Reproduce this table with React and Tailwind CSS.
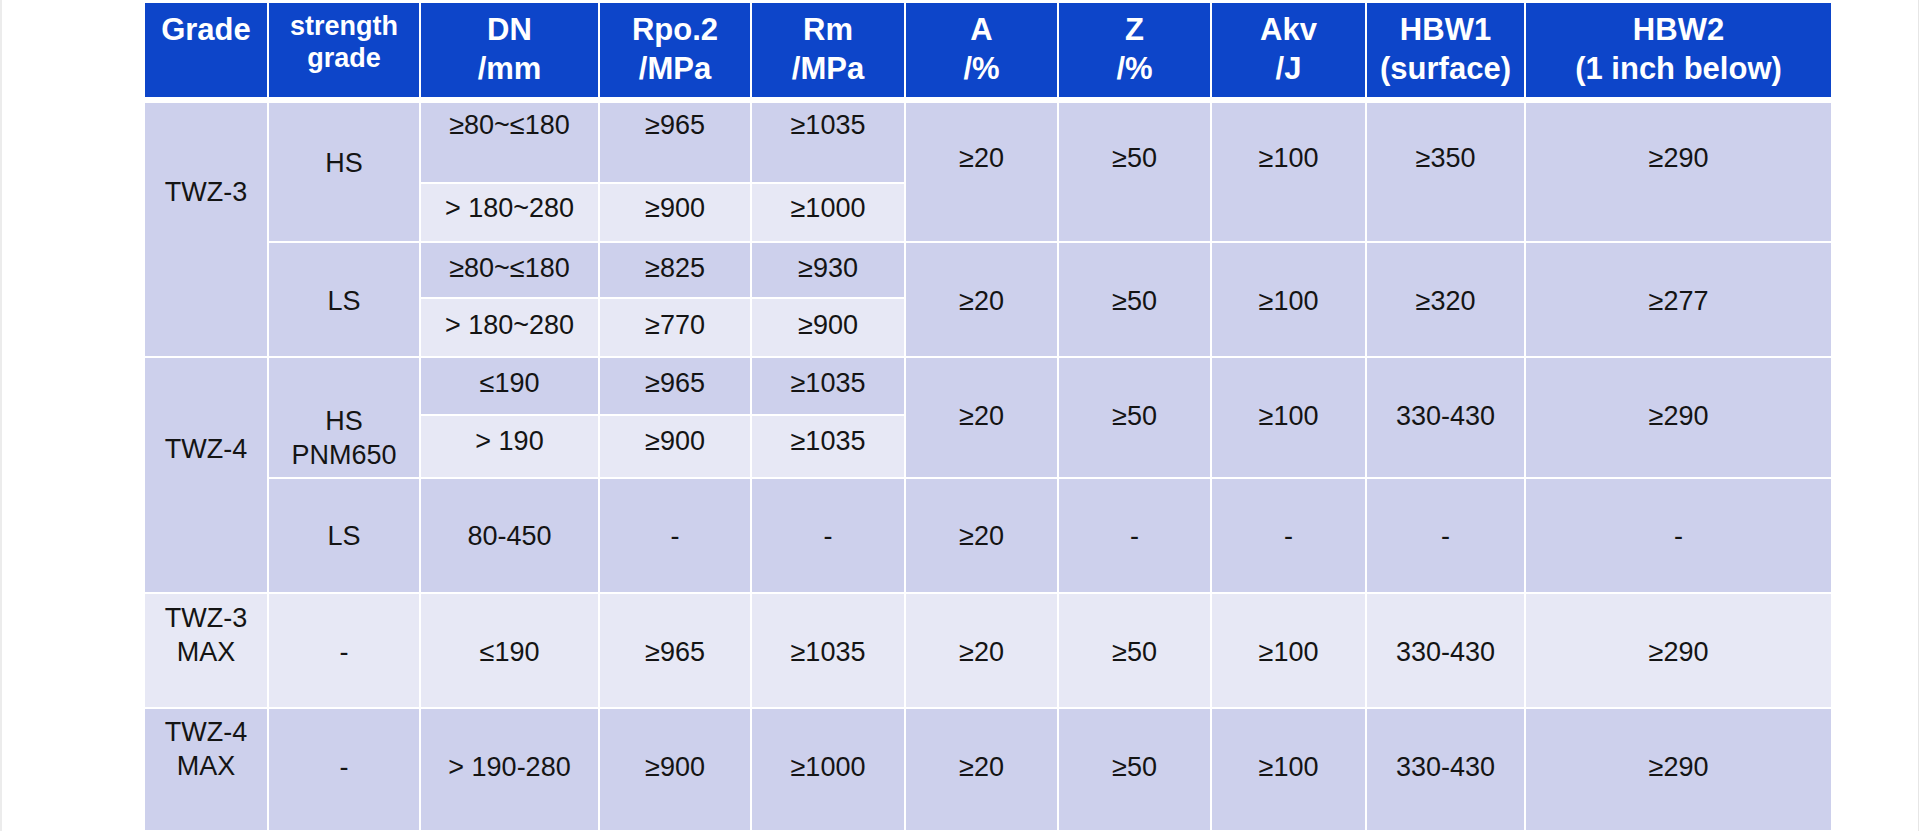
import React from "react";

const D = "bg-[#cdd0ec]";
const L = "bg-[#e7e8f5]";

function Cell({ pos, bg, shift = "", children }) {
  return (
    <div
      className={`${pos} ${bg} ${shift} flex items-center justify-center text-center text-[27px] leading-[34px] text-[#141414]`}
    >
      <div>{children}</div>
    </div>
  );
}

function H({ pos, small, children }) {
  return (
    <div
      className={`${pos} bg-[#0d45c9] flex justify-center pt-[7px] text-center font-bold text-white ${
        small ? "text-[27px] leading-[32px]" : "text-[31px] leading-[39px]"
      }`}
    >
      <div>{children}</div>
    </div>
  );
}

export default function App() {
  const cols =
    "grid-cols-[122px_150px_177px_150px_152px_151px_151px_153px_157px_305px]";
  return (
    <div
      className="flex h-[831px] w-[1920px] bg-white"
      style={{ fontFamily: '"Liberation Sans", Arial, sans-serif' }}
    >
      <div className="w-[2px] bg-[#ececec]" />
      <div className="pl-[143px] pt-[3px]">
        <div className={`grid ${cols} grid-rows-[94px] gap-x-[2px] bg-white`}>
          <H pos="col-start-1 row-start-1">Grade</H>
          <H pos="col-start-2 row-start-1" small>
            strength
            <br />
            grade
          </H>
          <H pos="col-start-3 row-start-1">
            DN
            <br />
            /mm
          </H>
          <H pos="col-start-4 row-start-1">
            Rpo.2
            <br />
            /MPa
          </H>
          <H pos="col-start-5 row-start-1">
            Rm
            <br />
            /MPa
          </H>
          <H pos="col-start-6 row-start-1">
            A
            <br />
            /%
          </H>
          <H pos="col-start-7 row-start-1">
            Z
            <br />
            /%
          </H>
          <H pos="col-start-8 row-start-1">
            Akv
            <br />
            /J
          </H>
          <H pos="col-start-9 row-start-1">
            HBW1
            <br />
            (surface)
          </H>
          <H pos="col-start-10 row-start-1">
            HBW2
            <br />
            (1 inch below)
          </H>
        </div>

        <div
          className={`mt-[6px] grid ${cols} grid-rows-[79px_57px_54px_57px_56px_61px_113px_113px_121px] gap-[2px] bg-white`}
        >
          {/* TWZ-3 group */}
          <Cell pos="col-start-1 row-start-1 row-span-4" bg={D} shift="pb-[75px]">
            TWZ-3
          </Cell>
          <Cell pos="col-start-2 row-start-1 row-span-2" bg={D} shift="pb-[18px]">
            HS
          </Cell>
          <Cell pos="col-start-3 row-start-1" bg={D} shift="pb-[36px]">
            ≥80~≤180
          </Cell>
          <Cell pos="col-start-4 row-start-1" bg={D} shift="pb-[36px]">
            ≥965
          </Cell>
          <Cell pos="col-start-5 row-start-1" bg={D} shift="pb-[36px]">
            ≥1035
          </Cell>
          <Cell pos="col-start-6 row-start-1 row-span-2" bg={D} shift="pb-[28px]">
            ≥20
          </Cell>
          <Cell pos="col-start-7 row-start-1 row-span-2" bg={D} shift="pb-[28px]">
            ≥50
          </Cell>
          <Cell pos="col-start-8 row-start-1 row-span-2" bg={D} shift="pb-[28px]">
            ≥100
          </Cell>
          <Cell pos="col-start-9 row-start-1 row-span-2" bg={D} shift="pb-[28px]">
            ≥350
          </Cell>
          <Cell pos="col-start-10 row-start-1 row-span-2" bg={D} shift="pb-[28px]">
            ≥290
          </Cell>
          <Cell pos="col-start-3 row-start-2" bg={L} shift="pb-[10px]">
            &gt; 180~280
          </Cell>
          <Cell pos="col-start-4 row-start-2" bg={L} shift="pb-[10px]">
            ≥900
          </Cell>
          <Cell pos="col-start-5 row-start-2" bg={L} shift="pb-[10px]">
            ≥1000
          </Cell>

          <Cell pos="col-start-2 row-start-3 row-span-2" bg={D} shift="pt-[2px]">
            LS
          </Cell>
          <Cell pos="col-start-3 row-start-3" bg={D} shift="pb-[5px]">
            ≥80~≤180
          </Cell>
          <Cell pos="col-start-4 row-start-3" bg={D} shift="pb-[5px]">
            ≥825
          </Cell>
          <Cell pos="col-start-5 row-start-3" bg={D} shift="pb-[5px]">
            ≥930
          </Cell>
          <Cell pos="col-start-6 row-start-3 row-span-2" bg={D} shift="pt-[3px]">
            ≥20
          </Cell>
          <Cell pos="col-start-7 row-start-3 row-span-2" bg={D} shift="pt-[3px]">
            ≥50
          </Cell>
          <Cell pos="col-start-8 row-start-3 row-span-2" bg={D} shift="pt-[3px]">
            ≥100
          </Cell>
          <Cell pos="col-start-9 row-start-3 row-span-2" bg={D} shift="pt-[3px]">
            ≥320
          </Cell>
          <Cell pos="col-start-10 row-start-3 row-span-2" bg={D} shift="pt-[3px]">
            ≥277
          </Cell>
          <Cell pos="col-start-3 row-start-4" bg={L} shift="pb-[5px]">
            &gt; 180~280
          </Cell>
          <Cell pos="col-start-4 row-start-4" bg={L} shift="pb-[5px]">
            ≥770
          </Cell>
          <Cell pos="col-start-5 row-start-4" bg={L} shift="pb-[5px]">
            ≥900
          </Cell>

          {/* TWZ-4 group */}
          <Cell pos="col-start-1 row-start-5 row-span-3" bg={D} shift="pb-[52px]">
            TWZ-4
          </Cell>
          <Cell pos="col-start-2 row-start-5 row-span-2" bg={D} shift="pt-[40px]">
            HS
            <br />
            PNM650
          </Cell>
          <Cell pos="col-start-3 row-start-5" bg={D} shift="pb-[7px]">
            ≤190
          </Cell>
          <Cell pos="col-start-4 row-start-5" bg={D} shift="pb-[7px]">
            ≥965
          </Cell>
          <Cell pos="col-start-5 row-start-5" bg={D} shift="pb-[7px]">
            ≥1035
          </Cell>
          <Cell pos="col-start-6 row-start-5 row-span-2" bg={D} shift="pb-[4px]">
            ≥20
          </Cell>
          <Cell pos="col-start-7 row-start-5 row-span-2" bg={D} shift="pb-[4px]">
            ≥50
          </Cell>
          <Cell pos="col-start-8 row-start-5 row-span-2" bg={D} shift="pb-[4px]">
            ≥100
          </Cell>
          <Cell pos="col-start-9 row-start-5 row-span-2" bg={D} shift="pb-[4px]">
            330-430
          </Cell>
          <Cell pos="col-start-10 row-start-5 row-span-2" bg={D} shift="pb-[4px]">
            ≥290
          </Cell>
          <Cell pos="col-start-3 row-start-6" bg={L} shift="pb-[12px]">
            &gt; 190
          </Cell>
          <Cell pos="col-start-4 row-start-6" bg={L} shift="pb-[12px]">
            ≥900
          </Cell>
          <Cell pos="col-start-5 row-start-6" bg={L} shift="pb-[12px]">
            ≥1035
          </Cell>

          <Cell pos="col-start-2 row-start-7" bg={D}>LS</Cell>
          <Cell pos="col-start-3 row-start-7" bg={D}>80-450</Cell>
          <Cell pos="col-start-4 row-start-7" bg={D}>-</Cell>
          <Cell pos="col-start-5 row-start-7" bg={D}>-</Cell>
          <Cell pos="col-start-6 row-start-7" bg={D}>≥20</Cell>
          <Cell pos="col-start-7 row-start-7" bg={D}>-</Cell>
          <Cell pos="col-start-8 row-start-7" bg={D}>-</Cell>
          <Cell pos="col-start-9 row-start-7" bg={D}>-</Cell>
          <Cell pos="col-start-10 row-start-7" bg={D}>-</Cell>

          {/* TWZ-3 MAX */}
          <Cell pos="col-start-1 row-start-8" bg={L} shift="pb-[32px]">
            TWZ-3
            <br />
            MAX
          </Cell>
          <Cell pos="col-start-2 row-start-8" bg={L} shift="pt-[3px]">-</Cell>
          <Cell pos="col-start-3 row-start-8" bg={L} shift="pt-[3px]">≤190</Cell>
          <Cell pos="col-start-4 row-start-8" bg={L} shift="pt-[3px]">≥965</Cell>
          <Cell pos="col-start-5 row-start-8" bg={L} shift="pt-[3px]">≥1035</Cell>
          <Cell pos="col-start-6 row-start-8" bg={L} shift="pt-[3px]">≥20</Cell>
          <Cell pos="col-start-7 row-start-8" bg={L} shift="pt-[3px]">≥50</Cell>
          <Cell pos="col-start-8 row-start-8" bg={L} shift="pt-[3px]">≥100</Cell>
          <Cell pos="col-start-9 row-start-8" bg={L} shift="pt-[3px]">330-430</Cell>
          <Cell pos="col-start-10 row-start-8" bg={L} shift="pt-[3px]">≥290</Cell>

          {/* TWZ-4 MAX */}
          <Cell pos="col-start-1 row-start-9" bg={D} shift="pb-[41px]">
            TWZ-4
            <br />
            MAX
          </Cell>
          <Cell pos="col-start-2 row-start-9" bg={D} shift="pb-[6px]">-</Cell>
          <Cell pos="col-start-3 row-start-9" bg={D} shift="pb-[6px]">&gt; 190-280</Cell>
          <Cell pos="col-start-4 row-start-9" bg={D} shift="pb-[6px]">≥900</Cell>
          <Cell pos="col-start-5 row-start-9" bg={D} shift="pb-[6px]">≥1000</Cell>
          <Cell pos="col-start-6 row-start-9" bg={D} shift="pb-[6px]">≥20</Cell>
          <Cell pos="col-start-7 row-start-9" bg={D} shift="pb-[6px]">≥50</Cell>
          <Cell pos="col-start-8 row-start-9" bg={D} shift="pb-[6px]">≥100</Cell>
          <Cell pos="col-start-9 row-start-9" bg={D} shift="pb-[6px]">330-430</Cell>
          <Cell pos="col-start-10 row-start-9" bg={D} shift="pb-[6px]">≥290</Cell>
        </div>
      </div>
      <div className="flex-1" />
      <div className="w-px bg-[#e6e6e6]" />
      <div className="w-px" />
    </div>
  );
}
